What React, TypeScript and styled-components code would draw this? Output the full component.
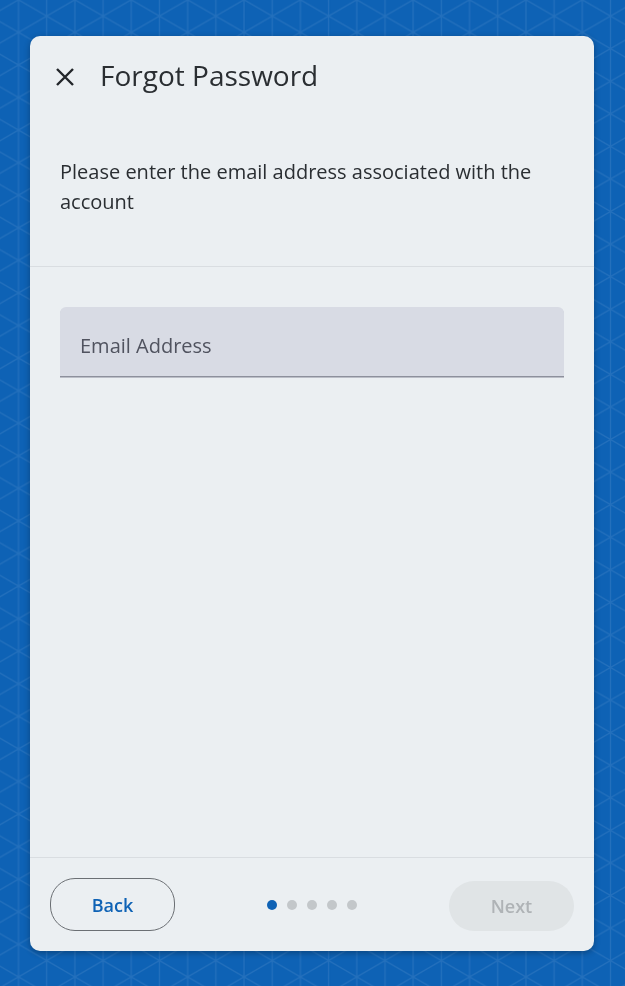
import React, { useState } from "react";
import styled, { createGlobalStyle } from "styled-components";

const GlobalStyle = createGlobalStyle`
  *, *::before, *::after { box-sizing: border-box; }
  body {
    margin: 0;
    background: #0e62b5;
    color: #2a2e32;
    font-family: "Open Sans", sans-serif;
    font-size: 20px;
    line-height: 30px;
  }
  button, input { font: inherit; }
`;

const Backdrop = styled.svg`
  position: fixed;
  inset: 0;
  z-index: -1;
  width: 100%;
  height: 100%;
`;

const Page = styled.main`
  display: flex;
  min-height: 100vh;
  padding: 36px 31px 35px 30px;
`;

const Card = styled.form`
  display: flex;
  flex: 1;
  flex-direction: column;
  min-width: 0;
  border-radius: 10px;
  background: #ebeff2;
  box-shadow: 0 2px 6px rgba(0, 0, 0, 0.3);
`;

const Header = styled.header`
  display: flex;
  align-items: center;
  gap: 20px;
  padding: 16px 20px 14px;
`;

const CloseButton = styled.button`
  display: flex;
  align-items: center;
  justify-content: center;
  width: 30px;
  height: 50px;
  padding: 0;
  border: 0;
  background: none;
  color: #22262a;
  cursor: pointer;
`;

const Title = styled.h1`
  margin: 0;
  padding-bottom: 4px;
  font-size: 28px;
  font-weight: 400;
  line-height: 40px;
`;

const Intro = styled.p`
  margin: 0;
  padding: 41px 30px 49px;
  border-bottom: 1px solid #d9dde1;
`;

const Content = styled.div`
  flex: 1;
  padding: 40px 30px;
`;

const Field = styled.div`
  position: relative;
  height: 70px;
  border-bottom: 1px solid #8d909c;
  border-radius: 6px 6px 0 0;
  background: #d8dbe4;
  box-shadow: 0 1px 0 #bbbec7;
`;

const FieldLabel = styled.label<{ $hidden: boolean }>`
  position: absolute;
  inset: 0 20px;
  display: flex;
  align-items: center;
  padding-top: 8px;
  color: #50535f;
  pointer-events: none;
  visibility: ${(p) => (p.$hidden ? "hidden" : "visible")};
`;

const FieldInput = styled.input`
  width: 100%;
  height: 100%;
  padding: 8px 20px 0;
  border: 0;
  outline: 0;
  background: transparent;
  color: inherit;
`;

const Footer = styled.footer`
  display: flex;
  align-items: flex-end;
  justify-content: space-between;
  padding: 20px;
  border-top: 1px solid #d9dde1;
`;

const PillButton = styled.button<{ $outlined?: boolean }>`
  width: 125px;
  height: ${(p) => (p.$outlined ? 53 : 50)}px;
  padding: 0;
  border: ${(p) => (p.$outlined ? "1px solid #6b6f74" : "0")};
  border-radius: 25px;
  background: ${(p) => (p.$outlined ? "transparent" : "#e0e4e6")};
  color: ${(p) => (p.$outlined ? "#0e62b5" : "#afb3b6")};
  font-size: 18px;
  font-weight: 600;
  cursor: pointer;

  &:disabled { cursor: default; }
`;

const Steps = styled.ol`
  display: flex;
  align-items: center;
  gap: 10px;
  height: 53px;
  margin: 0;
  padding: 0;
  list-style: none;
`;

const Step = styled.li<{ $active: boolean }>`
  width: 10px;
  height: 10px;
  border-radius: 50%;
  background: ${(p) => (p.$active ? "#0e62b5" : "#c3c7ca")};
`;

const steps = [1, 2, 3, 4, 5];

export default function App() {
  const [email, setEmail] = useState("");

  return (
    <>
      <GlobalStyle />
      <Backdrop aria-hidden="true">
        <defs>
          <pattern id="triangles" x="18.5" y="-0.2" width="56.38" height="32.57" patternUnits="userSpaceOnUse">
            <path
              d="M0 0V32.57M28.19 0V32.57M56.38 0V32.57M0 0L56.38 32.57M56.38 0L0 32.57"
              fill="none"
              stroke="#2470bc"
              strokeWidth="1.3"
            />
          </pattern>
        </defs>
        <rect width="100%" height="100%" fill="url(#triangles)" />
      </Backdrop>
      <Page>
        <Card onSubmit={(e) => e.preventDefault()}>
          <Header>
            <CloseButton type="button" aria-label="Close">
              <svg width="18" height="18" viewBox="0 0 18 18" fill="none" stroke="currentColor" strokeWidth="2.4">
                <path d="M1 1L17 17M17 1L1 17" />
              </svg>
            </CloseButton>
            <Title>Forgot Password</Title>
          </Header>
          <Intro>Please enter the email address associated with the account</Intro>
          <Content>
            <Field>
              <FieldInput
                id="email"
                type="email"
                value={email}
                onChange={(e) => setEmail(e.target.value)}
              />
              <FieldLabel htmlFor="email" $hidden={email !== ""}>Email Address</FieldLabel>
            </Field>
          </Content>
          <Footer>
            <PillButton type="button" $outlined>Back</PillButton>
            <Steps aria-label="Progress">
              {steps.map((n) => (
                <Step key={n} $active={n === 1} aria-current={n === 1 ? "step" : undefined} />
              ))}
            </Steps>
            <PillButton type="submit" disabled={email === ""}>Next</PillButton>
          </Footer>
        </Card>
      </Page>
    </>
  );
}
